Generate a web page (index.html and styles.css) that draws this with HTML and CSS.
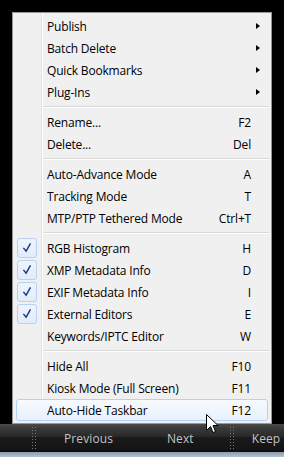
FILE: index.html
```html
<!DOCTYPE html>
<html>
<head>
<meta charset="utf-8">
<link rel="stylesheet" href="styles.css">
</head>
<body>
<div class="screen">
  <div class="stage">
    <div class="menu">
      <div class="item"><span class="check"></span><span class="label">Publish</span><span class="key"></span><span class="sub"><i class="tri"></i></span></div>
      <div class="item"><span class="check"></span><span class="label">Batch Delete</span><span class="key"></span><span class="sub"><i class="tri"></i></span></div>
      <div class="item"><span class="check"></span><span class="label">Quick Bookmarks</span><span class="key"></span><span class="sub"><i class="tri"></i></span></div>
      <div class="item"><span class="check"></span><span class="label">Plug-Ins</span><span class="key"></span><span class="sub"><i class="tri"></i></span></div>
      <div class="sep"></div>
      <div class="item"><span class="check"></span><span class="label">Rename...</span><span class="key">F2</span><span class="sub"></span></div>
      <div class="item"><span class="check"></span><span class="label">Delete...</span><span class="key">Del</span><span class="sub"></span></div>
      <div class="sep"></div>
      <div class="item"><span class="check"></span><span class="label">Auto-Advance Mode</span><span class="key">A</span><span class="sub"></span></div>
      <div class="item"><span class="check"></span><span class="label">Tracking Mode</span><span class="key">T</span><span class="sub"></span></div>
      <div class="item"><span class="check"></span><span class="label">MTP/PTP Tethered Mode</span><span class="key">Ctrl+T</span><span class="sub"></span></div>
      <div class="sep"></div>
      <div class="item"><span class="check on"><svg viewBox="0 0 20 20" width="20" height="20"><path d="M6.5 10.5 L9 13.5 L13.5 5.5" fill="none" stroke="#1b3a8c" stroke-width="1.6" stroke-linecap="square"/></svg></span><span class="label">RGB Histogram</span><span class="key">H</span><span class="sub"></span></div>
      <div class="item"><span class="check on"><svg viewBox="0 0 20 20" width="20" height="20"><path d="M6.5 10.5 L9 13.5 L13.5 5.5" fill="none" stroke="#1b3a8c" stroke-width="1.6" stroke-linecap="square"/></svg></span><span class="label">XMP Metadata Info</span><span class="key">D</span><span class="sub"></span></div>
      <div class="item"><span class="check on"><svg viewBox="0 0 20 20" width="20" height="20"><path d="M6.5 10.5 L9 13.5 L13.5 5.5" fill="none" stroke="#1b3a8c" stroke-width="1.6" stroke-linecap="square"/></svg></span><span class="label">EXIF Metadata Info</span><span class="key">I</span><span class="sub"></span></div>
      <div class="item"><span class="check on"><svg viewBox="0 0 20 20" width="20" height="20"><path d="M6.5 10.5 L9 13.5 L13.5 5.5" fill="none" stroke="#1b3a8c" stroke-width="1.6" stroke-linecap="square"/></svg></span><span class="label">External Editors</span><span class="key">E</span><span class="sub"></span></div>
      <div class="item"><span class="check"></span><span class="label">Keywords/IPTC Editor</span><span class="key">W</span><span class="sub"></span></div>
      <div class="sep"></div>
      <div class="item"><span class="check"></span><span class="label">Hide All</span><span class="key">F10</span><span class="sub"></span></div>
      <div class="item"><span class="check"></span><span class="label">Kiosk Mode (Full Screen)</span><span class="key">F11</span><span class="sub"></span></div>
      <div class="item hot"><span class="check"></span><span class="label">Auto-Hide Taskbar</span><span class="key">F12</span><span class="sub"></span></div>
    </div>
  </div>
  <div class="taskbar">
    <span class="grip g1"></span>
    <span class="tb prev">Previous</span>
    <span class="tb next">Next</span>
    <span class="grip g2"></span>
    <span class="tb keep">Keep</span>
  </div>
  <div class="strip"></div>
  <svg class="cursor" width="13" height="20" viewBox="0 0 13 20"><path d="M0.5 0.5 L0.5 16.5 L4.5 12.5 L7 18.5 L9.5 17.5 L7 11.5 L12 11.5 Z" fill="#fff" stroke="#000" stroke-width="1" stroke-linejoin="miter"/></svg>
</div>
</body>
</html>
```
FILE: styles.css
```css
html, body {
  margin: 0;
  padding: 0;
  background: #000;
}
.screen {
  position: relative;
  width: 284px;
  height: 457px;
  overflow: hidden;
  display: flex;
  flex-direction: column;
  font-family: "Open Sans", "Noto Sans", sans-serif;
}
.stage {
  height: 424px;
  padding: 12px 0 0 12px;
  box-sizing: border-box;
}
.menu {
  width: 260px;
  box-sizing: border-box;
  border: 1px solid #979797;
  background-color: #f0f0f0;
  background-image: linear-gradient(to right, transparent 28px, #e2e3e3 28px, #e2e3e3 29px, #ffffff 29px, #ffffff 30px, transparent 30px);
  padding: 2px;
  display: flex;
  flex-direction: column;
}
.item {
  height: 22px;
  display: flex;
  align-items: center;
  font-size: 12px;
  letter-spacing: -0.18px;
  color: #000;
  box-sizing: border-box;
  border: 1px solid transparent;
  border-radius: 3px;
  margin: 0 1px;
}
.check {
  width: 20px;
  height: 20px;
  flex: none;
  margin-right: 10px;
  box-sizing: border-box;
  border: 1px solid transparent;
  border-radius: 3px;
  display: flex;
  align-items: center;
  justify-content: center;
}
.check.on {
  border-color: #b7d1f2;
  background: linear-gradient(#eef4fc, #e2ecfa);
}
.check svg { display: block; }
.label {
  flex: 1;
  white-space: nowrap;
}
.key {
  white-space: nowrap;
}
.sub {
  width: 16px;
  flex: none;
  display: flex;
  align-items: center;
  padding-left: 5px;
  box-sizing: border-box;
}
.tri {
  display: block;
  width: 0;
  height: 0;
  border-top: 3.5px solid transparent;
  border-bottom: 3.5px solid transparent;
  border-left: 4px solid #000;
}
.sep {
  height: 8px;
  margin-left: 29px;
  background: linear-gradient(to bottom, transparent 3px, #d7d7d7 3px, #d7d7d7 4px, #ffffff 4px, #ffffff 5px, transparent 5px);
}
.item.hot {
  border-color: #b3d1f3;
  background: linear-gradient(#f7fafe, #e9f1fc);
}
.taskbar {
  height: 28px;
  position: relative;
  background: linear-gradient(#4a4a4a 0, #3a3a3a 4px, #2a2a2a 12px, #1a1a1a 14px, #141414 26px, #0a0a0a 28px);
  display: flex;
  align-items: center;
  font-size: 12px;
  color: #c4c4c4;
  letter-spacing: 0.1px;
  white-space: nowrap;
  overflow: hidden;
}
.grip {
  width: 7px;
  height: 24px;
  flex: none;
  background-image: radial-gradient(circle, #777 0.8px, transparent 1px);
  background-size: 3px 3px;
}
.g1 { margin-left: 31px; }
.prev { margin-left: 26px; }
.next { margin-left: 54px; }
.g2 { margin-left: 35px; }
.keep { margin-left: 16px; }
.strip {
  height: 5px;
  background: linear-gradient(#8c9aab, #b4c2d2);
}
.cursor {
  position: absolute;
  left: 206px;
  top: 414px;
}
```
